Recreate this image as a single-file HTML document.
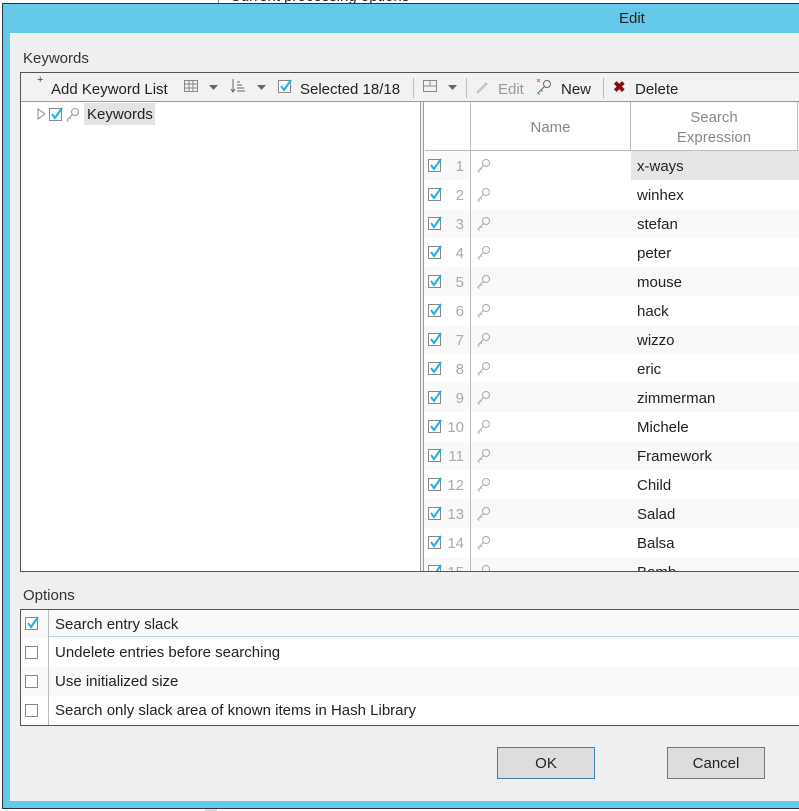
<!DOCTYPE html>
<html><head><meta charset="utf-8"><style>
*{margin:0;padding:0;box-sizing:border-box}
body{width:799px;height:811px;overflow:hidden;background:#fff;position:relative;font-family:"Liberation Sans",sans-serif;font-size:15px;color:#222}
.abs{position:absolute}
.win{left:2px;top:3px;width:820px;height:806px;border:1px solid #333;background:#65c9e9}
.panel{left:10px;top:33px;width:800px;height:768px;background:#efefef}
.cb{position:absolute;width:13px;height:13px;border:1px solid #888;background:#fff}
.cb svg{position:absolute;left:-1px;top:-3px}
.row{position:absolute;left:424px;width:380px;height:29px}
.kw{position:absolute;left:637px;}
.sep{position:absolute;width:1px;background:#bbb}
.opt{position:absolute;left:21px;width:790px;height:29px}
.opt span{position:absolute;left:34px;top:6px}
.btn{position:absolute;top:747px;width:98px;height:32px;background:#ddd;border:1px solid #777;text-align:center;line-height:32px}
</style></head><body>
<div class="abs" style="left:218px;top:0;width:1px;height:3px;background:#888"></div>
<div class="abs" style="left:230px;top:-12px;font-size:15px">Current processing options</div>
<div class="abs win"></div>
<div class="abs" style="left:619px;top:10px;font-size:15px;color:#222">Edit</div>
<div class="abs panel"></div>
<div class="abs" style="left:23px;top:50px;color:#333">Keywords</div>
<div class="abs" style="left:20px;top:72px;width:790px;height:500px;border:1px solid #555;background:#fff"></div>
<div class="abs" style="left:21px;top:73px;width:790px;height:29px;background:#f2f2f2;border-bottom:1px solid #999"></div>
<div class="abs" style="left:37px;top:74px;font-size:11px;color:#444">+</div>
<div class="abs" style="left:51px;top:81px">Add Keyword List</div>
<svg class="abs" style="left:183px;top:79px" width="16" height="14"><g stroke="#888" fill="none"><rect x="1.5" y="1.5" width="13" height="11"/><path d="M6 1v12M10 1v12M1 5h14M1 9h14"/></g></svg>
<svg class="abs" style="left:209px;top:85px" width="10" height="6"><path d="M0 0h9L4.5 5z" fill="#666"/></svg>
<svg class="abs" style="left:230px;top:78px" width="16" height="16"><g stroke="#666" fill="none"><path d="M3 1v13M1 11l2 3 2-3M7 4h3M7 7h5M7 10h7M7 13h8"/></g></svg>
<svg class="abs" style="left:257px;top:85px" width="10" height="6"><path d="M0 0h9L4.5 5z" fill="#666"/></svg>
<div class="cb" style="left:278px;top:80px"><svg width="16" height="16"><path d="M3 8l3 4 7-10" stroke="#19b3e8" stroke-width="2" fill="none"/></svg></div>
<div class="abs" style="left:300px;top:81px">Selected 18/18</div>
<div class="sep" style="left:413px;top:78px;height:20px"></div>
<svg class="abs" style="left:422px;top:79px" width="16" height="14"><g stroke="#888" fill="none"><rect x="1.5" y="1.5" width="13" height="11"/><path d="M1 7h14M8 1v6"/></g></svg>
<svg class="abs" style="left:448px;top:85px" width="10" height="6"><path d="M0 0h9L4.5 5z" fill="#666"/></svg>
<div class="sep" style="left:466px;top:78px;height:20px"></div>
<svg class="abs" style="left:475px;top:80px" width="14" height="14"><path d="M2 12l9-9 1 1-9 9z" stroke="#bbb" fill="none"/></svg>
<div class="abs" style="left:498px;top:81px;color:#999">Edit</div>
<svg class="abs" style="left:536px;top:78px" width="18" height="18"><g stroke="#666" fill="none"><circle cx="11" cy="6" r="3.5"/><path d="M8.5 8.5L2 15l1.5 1.5M5 12l1.5 1.5"/></g><path d="M1 1l3 3M4 1L1 4" stroke="#e07030"/></svg>
<div class="abs" style="left:561px;top:81px">New</div>
<div class="sep" style="left:603px;top:78px;height:20px"></div>
<div class="abs" style="left:613px;top:78px;color:#8b1010;font-weight:bold;font-size:15px">✖</div>
<div class="abs" style="left:635px;top:81px">Delete</div>
<svg class="abs" style="left:37px;top:108px" width="10" height="12"><path d="M1 1l7 5-7 5z" stroke="#888" fill="#fff"/></svg>
<div class="cb" style="left:49px;top:108px"><svg width="16" height="16"><path d="M3 8l3 4 7-10" stroke="#19b3e8" stroke-width="2" fill="none"/></svg></div>
<svg class="abs" style="left:65px;top:106px" width="16" height="16"><g stroke="#999" fill="none"><circle cx="10" cy="6" r="3.5"/><path d="M7.5 8.5L2 14l1.5 1.5M4.5 11.5l1.5 1.5"/></g></svg>
<div class="abs" style="left:84px;top:103px;width:71px;height:22px;background:#e3e3e3"></div>
<div class="abs" style="left:87px;top:106px">Keywords</div>
<div class="abs" style="left:420px;top:102px;width:4px;height:470px;border-left:1px solid #999;border-right:1px solid #999;background:#f4f4f4"></div>
<div class="abs" style="left:425px;top:102px;width:380px;height:49px;background:#fff;border-bottom:1px solid #bbb"></div>
<div class="sep" style="left:470px;top:102px;height:470px"></div>
<div class="sep" style="left:630px;top:102px;height:49px"></div>
<div class="sep" style="left:797px;top:102px;height:49px"></div>
<div class="abs" style="left:471px;top:119px;width:159px;text-align:center;color:#888">Name</div>
<div class="abs" style="left:631px;top:108px;width:166px;text-align:center;color:#888;line-height:20px">Search<br>Expression</div>
<div id="rows"></div>
<script>
var w=["x-ways","winhex","stefan","peter","mouse","hack","wizzo","eric","zimmerman","Michele","Framework","Child","Salad","Balsa","Bomb"];
var h="";
for(var i=0;i<15;i++){var y=151+i*29;var bg=i%2==0?"#f9f9f9":"#fff";
h+='<div class="row" style="top:'+y+'px;background:'+bg+'"></div>';
if(i==0)h+='<div class="abs" style="left:471px;top:152px;width:160px;height:28px;background:#fff"></div><div class="abs" style="left:631px;top:151px;width:170px;height:29px;background:#e6e6e6"></div>';
h+='<div class="cb" style="left:428px;top:'+(y+8)+'px"><svg width="16" height="16"><path d="M3 8l3 4 7-10" stroke="#19b3e8" stroke-width="2" fill="none"/></svg></div>';
h+='<div class="abs" style="left:446px;top:'+(y+7)+'px;width:18px;text-align:right;color:#aaa">'+(i+1)+'</div>';
h+='<svg class="abs" style="left:476px;top:'+(y+6)+'px" width="16" height="16"><g stroke="#aaa" fill="none"><circle cx="10" cy="6" r="3.5"/><path d="M7.5 8.5L2 14l1.5 1.5M4.5 11.5l1.5 1.5"/></g></svg>';
h+='<div class="kw" style="top:'+(y+7)+'px">'+w[i]+'</div>';}
h+='<div class="sep" style="left:470px;top:151px;height:421px"></div>';
document.getElementById("rows").innerHTML=h;
</script>
<div class="abs" style="left:10px;top:572px;width:800px;height:20px;background:#efefef"></div>
<div class="abs" style="left:20px;top:571px;width:790px;height:1px;background:#555"></div>
<div class="abs" style="left:23px;top:587px;color:#333">Options</div>
<div class="abs" style="left:20px;top:609px;width:790px;height:117px;border:1px solid #555;background:#fff"></div>
<div class="opt" style="top:610px;background:#f9f9f9"><span>Search entry slack</span></div>
<div class="abs" style="left:49px;top:636px;width:760px;height:1px;background:#b8d4f0"></div>
<div class="opt" style="top:638px"><span>Undelete entries before searching</span></div>
<div class="opt" style="top:667px;background:#f9f9f9"><span>Use initialized size</span></div>
<div class="opt" style="top:696px"><span>Search only slack area of known items in Hash Library</span></div>
<div class="sep" style="left:48px;top:610px;height:115px"></div>
<div class="cb" style="left:25px;top:617px"><svg width="16" height="16"><path d="M3 8l3 4 7-10" stroke="#19b3e8" stroke-width="2" fill="none"/></svg></div>
<div class="cb" style="left:25px;top:646px"></div>
<div class="cb" style="left:25px;top:675px"></div>
<div class="cb" style="left:25px;top:704px"></div>
<div class="btn" style="left:497px;border-color:#3c7fb1">OK</div>
<div class="btn" style="left:667px">Cancel</div>
<div class="abs" style="left:0;top:809px;width:799px;height:2px;background:#fff"></div>
<div class="abs" style="left:205px;top:809px;width:12px;height:2px;background:#ddd"></div>
</body></html>
